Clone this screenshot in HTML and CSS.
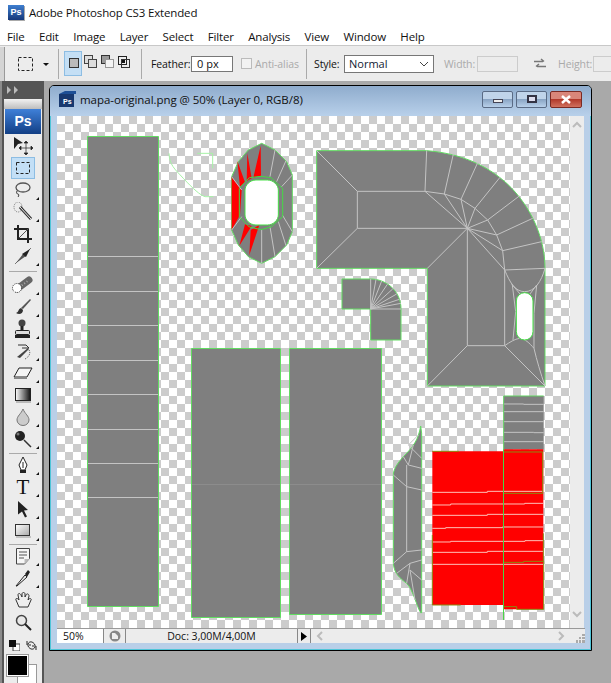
FILE: index.html
```html
<!DOCTYPE html>
<html lang="en">
<head>
<meta charset="utf-8">
<title>Adobe Photoshop CS3 Extended</title>
<link rel="stylesheet" href="styles.css">
</head>
<body>
<div class="app">
  <header class="titlebar">
    <span class="ps-badge">Ps</span>
    <span class="app-title">Adobe Photoshop CS3 Extended</span>
  </header>
  <nav class="menubar">
    <span>File</span><span>Edit</span><span>Image</span><span>Layer</span><span>Select</span><span>Filter</span><span>Analysis</span><span>View</span><span>Window</span><span>Help</span>
  </nav>
  <div class="options">
    <div class="grip"></div>
    <svg class="opt-tool" width="36" height="20" viewBox="0 0 36 20"><rect x="2.5" y="3.5" width="14" height="13" fill="none" stroke="#222" stroke-dasharray="3 2"/><path d="M27 9h6l-3 3z" fill="#111"/></svg>
    <div class="opt-sep first"></div>
    <svg class="opt-modes" width="70" height="26" viewBox="0 0 70 26">
      <rect x="0.5" y="0.5" width="17" height="24" fill="#c4dff5" stroke="#8dbde3"/>
      <rect x="5.5" y="7.5" width="9" height="9" fill="#bbb" stroke="#333"/>
      <rect x="20.5" y="4.5" width="8" height="8" fill="#ddd" stroke="#444"/><rect x="24.5" y="8.5" width="8" height="8" fill="#ddd" stroke="#444"/>
      <rect x="37.5" y="4.5" width="8" height="8" fill="#999" stroke="#333"/><rect x="41.5" y="8.5" width="8" height="8" fill="#f4f4f4" stroke="#999"/>
      <rect x="54.5" y="5.5" width="8" height="8" fill="#eee" stroke="#222"/><rect x="57" y="8" width="4" height="4" fill="#111"/><rect x="57.5" y="8.5" width="8" height="8" fill="none" stroke="#333"/>
    </svg>
    <div class="opt-sep second"></div>
    <label class="opt-label feather">Feather:</label>
    <span class="field feather-field">0 px</span>
    <span class="check"></span>
    <span class="opt-label off anti">Anti-alias</span>
    <div class="opt-sep third"></div>
    <span class="opt-label style">Style:</span>
    <span class="select">Normal<svg width="10" height="6" viewBox="0 0 10 6"><path d="M1 1l4 4 4-4" fill="none" stroke="#444"/></svg></span>
    <span class="opt-label off width-l">Width:</span>
    <span class="field off-field width-f"></span>
    <svg class="swap" width="14" height="12" viewBox="0 0 14 12"><path d="M1 3.5h9M8 1l3 2.5M13 8.5H4M6 6L3 8.500" fill="none" stroke="#777" stroke-width="1.500"/></svg>
    <span class="opt-label off height-l">Height:</span>
    <span class="field off-field height-f"></span>
  </div>

  <main class="workspace">
    <aside class="toolcol">
      <div class="tool-head"><svg width="14" height="8" viewBox="0 0 14 8"><path d="M1 0l4 4-4 4zM8 0l4 4-4 4z" fill="#bbb"/></svg></div>
      <div class="toolbox">
        <div class="tool-grip"></div>
        <div class="ps-logo">Ps</div>
        <div class="tool"><svg width="24" height="20" viewBox="0 0 24 20"><path d="M3 1l9 6-5 1-4 5z" fill="#222"/><path d="M15 7v10M10 12h10M15 5l-2 2h4zM15 19l-2-2h4zM8 12l2-2v4zM22 12l-2-2v4z" fill="#222" stroke="#222" stroke-width=".7"/></svg></div>
        <div class="tool active"><svg width="18" height="16" viewBox="0 0 18 16"><rect x="2.500" y="2.500" width="13" height="11" fill="none" stroke="#222" stroke-dasharray="3 2"/></svg></div>
        <div class="tool corner"><svg width="18" height="18" viewBox="0 0 18 18"><ellipse cx="9" cy="6.500" rx="7" ry="4.500" fill="none" stroke="#555" stroke-width="1.300"/><path d="M3 10c-1 2 0 3 1 3s1 2 0 3" fill="none" stroke="#333"/></svg></div>
        <div class="tool corner"><svg width="20" height="20" viewBox="0 0 20 20"><ellipse cx="5" cy="5" rx="4" ry="5" fill="none" stroke="#777" stroke-dasharray="1 1"/><path d="M7 5l11 12" stroke="#333" stroke-width="3"/><path d="M7 5l11 12" stroke="#eee"/></svg></div>
        <div class="tool"><svg width="20" height="20" viewBox="0 0 20 20"><path d="M5 1v14h14M1 5h14v14" fill="none" stroke="#222" stroke-width="2"/><path d="M6 14l10-10" stroke="#555"/></svg></div>
        <div class="tool corner"><svg width="18" height="18" viewBox="0 0 18 18"><path d="M1 17L17 1" stroke="#777" stroke-width="1"/><path d="M2 16l7-9 3 2z" fill="#555"/><path d="M8 7l8-5-4 8z" fill="#222"/></svg></div>
        <div class="tool-sep top"></div>
        <div class="tool corner"><svg width="22" height="18" viewBox="0 0 22 18"><path d="M5 13L17 4" stroke="#666" stroke-width="7" stroke-linecap="round"/><path d="M5 13L17 4" stroke="#aaa" stroke-width="2" stroke-dasharray="1 2"/><circle cx="5" cy="12" r="4.500" fill="#fff" stroke="#333" stroke-dasharray="1 1"/></svg></div>
        <div class="tool corner"><svg width="18" height="18" viewBox="0 0 18 18"><path d="M7 10L16 1l1 1-8 9z" fill="#555"/><path d="M7 10c-3 1-2 4-5 5 3 2 7 1 7-3z" fill="#333"/></svg></div>
        <div class="tool corner"><svg width="18" height="20" viewBox="0 0 18 20"><circle cx="8" cy="4" r="3.500" fill="#444"/><rect x="6.500" y="7" width="3" height="5" fill="#222"/><rect x="1.500" y="11.500" width="14" height="4" rx="1" fill="#ddd" stroke="#222"/><rect x="1" y="16" width="15" height="3" fill="#222"/></svg></div>
        <div class="tool corner"><svg width="18" height="18" viewBox="0 0 18 18"><path d="M4 3h8M8 6h7l-3-3" fill="none" stroke="#333"/><path d="M3 15l11-9 1 1-9 9z" fill="#444"/><path d="M15 8c2 3 0 7-4 9" fill="none" stroke="#555" stroke-dasharray="1 1"/></svg></div>
        <div class="tool corner"><svg width="20" height="14" viewBox="0 0 20 14"><path d="M6 2h13l-5 9H1z" fill="#f4f4f4" stroke="#222"/><path d="M1 11h13v2H1z" fill="#888"/></svg></div>
        <div class="tool corner"><svg width="17" height="15" viewBox="0 0 17 15"><defs><linearGradient id="gr"><stop offset="0" stop-color="#fff"/><stop offset="1" stop-color="#111"/></linearGradient></defs><rect x="0.500" y="0.500" width="15" height="12" fill="url(#gr)" stroke="#222"/><path d="M1 14h15" stroke="#888"/></svg></div>
        <div class="tool corner"><svg width="14" height="18" viewBox="0 0 14 18"><path d="M7 1C5 6 1 8 1 12a6 5.500 0 0 0 12 0C13 8 9 6 7 1z" fill="#ccc" stroke="#777"/></svg></div>
        <div class="tool corner"><svg width="18" height="18" viewBox="0 0 18 18"><circle cx="6" cy="6" r="5" fill="#222"/><circle cx="4" cy="4" r="1.500" fill="#777"/><path d="M10 10l7 7" stroke="#333" stroke-width="1.500"/></svg></div>
        <div class="tool-sep"></div>
        <div class="tool corner"><svg width="12" height="18" viewBox="0 0 12 18"><path d="M6 1l4 8-2 5H4L2 9z" fill="#fff" stroke="#222"/><path d="M6 6v6" stroke="#222"/><rect x="3" y="14" width="6" height="3" fill="#222"/></svg></div>
        <div class="tool corner type-tool">T</div>
        <div class="tool corner"><svg width="12" height="18" viewBox="0 0 12 18"><path d="M1 1l10 9-4 .500 3 6-2 1-3-6-4 3z" fill="#222"/></svg></div>
        <div class="tool corner"><svg width="16" height="14" viewBox="0 0 16 14"><defs><linearGradient id="sh" x2="1" y2="1"><stop offset="0" stop-color="#fff"/><stop offset="1" stop-color="#aaa"/></linearGradient></defs><rect x="0.500" y="0.500" width="14" height="11" fill="url(#sh)" stroke="#333"/><path d="M1 13h15" stroke="#999"/></svg></div>
        <div class="tool-sep low"></div>
        <div class="tool corner"><svg width="15" height="17" viewBox="0 0 15 17"><path d="M.5.500h13v10l-5 5.500H.5z" fill="#f6f6f6" stroke="#444"/><path d="M3 4h8M3 7h8M3 10h5" stroke="#555"/><path d="M8.500 16v-5h5z" fill="#bbb"/></svg></div>
        <div class="tool corner"><svg width="16" height="18" viewBox="0 0 16 18"><path d="M1 17l9-11 2 2-10 9z" fill="#eee" stroke="#222"/><path d="M10 5l3-4 2 2-3 5z" fill="#222"/></svg></div>
        <div class="tool"><svg width="17" height="18" viewBox="0 0 17 18"><path d="M4 16L1 9c-1-2 2-2 3 0L3 4c0-2 2-2 3 0l1 2V3c0-2 3-2 3 0v3l1-2c1-2 3-1 3 1l-1 4 1-1c1-1 3 0 2 1l-3 7z" fill="#eee" stroke="#333"/></svg></div>
        <div class="tool"><svg width="17" height="17" viewBox="0 0 17 17"><circle cx="6.500" cy="6.500" r="5" fill="#e8e8e8" stroke="#444" stroke-width="1.500"/><path d="M10 10l6 6" stroke="#222" stroke-width="2"/></svg></div>
        <div class="color-mini">
          <svg width="11" height="11" viewBox="0 0 11 11"><rect x="4" y="4" width="7" height="7" fill="#fff" stroke="#444"/><rect width="7" height="7" fill="#111"/></svg>
          <svg width="11" height="11" viewBox="0 0 11 11"><path d="M2 4c1-3 5-3 7 1M9 7c-1 3-5 3-7-1" fill="none" stroke="#222"/><path d="M1 1v4h4M10 10V6H6" fill="none" stroke="#222"/></svg>
        </div>
        <div class="swatches"><div class="bg-swatch"></div><div class="fg-swatch"></div></div>
      </div>
    </aside>

    <section class="docwin">
      <div class="doc-title">
        <svg class="doc-icon" width="17" height="16" viewBox="0 0 17 16"><path d="M0 3l6-3h11v3z" fill="#1d4f96"/><rect y="3" width="15" height="13" fill="#17386f"/><text x="4" y="13" class="doc-ps">Ps</text></svg>
        <span class="doc-name">mapa-original.png @ 50% (Layer 0, RGB/8)</span>
        <div class="win-btns">
          <span class="wbtn"><i class="g-min"></i></span>
          <span class="wbtn"><i class="g-max"></i></span>
          <span class="wbtn close"><svg width="12" height="9" viewBox="0 0 12 9"><path d="M2 1l8 7M10 1L2 8" stroke="#fff" stroke-width="2.500"/></svg></span>
        </div>
      </div>
      <div class="doc-body">
        <svg class="canvas" width="513" height="512" viewBox="57 116 513 512">
          <defs>
            <pattern id="checker" patternUnits="userSpaceOnUse" x="57" y="116" width="16" height="16">
              <rect width="16" height="16" fill="#fff"/>
              <rect x="8" width="8" height="8" fill="#ccc"/>
              <rect y="8" width="8" height="8" fill="#ccc"/>
            </pattern>
          </defs>
          <rect x="57" y="116" width="513" height="512" fill="url(#checker)"/>

          <g class="mesh">
            <rect class="uv" x="87.500" y="136.500" width="71" height="470"/>
            <path d="M88 256.500h70M88 291.500h70M88 325.500h70M88 360.500h70M88 394.500h70M88 429.500h70M88 463.500h70M88 497.500h70"/>
            <rect class="uv" x="191.500" y="348.500" width="89" height="269"/>
            <path class="faint" d="M192 484.500h88"/>
            <rect class="uv" x="289.500" y="348.500" width="92" height="266"/>
            <path class="faint" d="M290 484.500h91"/>
          </g>

          <g class="mesh z3" transform="translate(150 125) scale(.33333)">
            <path class="ghost" d="M57 85c2 35 15 45 43 75 30 32 50 50 65 55h25M142 85h46v45"/>
            <path class="uv" d="M335 55l40 20 35 35 17 40v170l-17 40-35 35-40 20-40-20-30-35-20-45V155l20-45 30-35z"/>
            <path class="red" d="M245 155l30 40-5 75-25 45zM262 108l23 64-15 13zM292 85l13 75-15 8zM332 62l1 90-23 6zM285 298l20 5-37 59zM302 315l26-15-30 90z"/>
            <path d="M375 75l-15 80M408 107l-28 63M427 150l-32 35M427 320l-30-50M408 362l-23-72M375 395l-15-90M335 415v-100M245 315l30-40M245 155l30 40"/>
            <path class="hole" d="M318 165h34c18 0 33 15 33 30v75c0 15-15 30-33 30h-34c-18 0-33-15-33-30v-75c0-15 15-30 33-30z"/>
            <path class="green" d="M333 154l30 4 35 32v85l-35 31-30 8-35-8-30-31v-85l30-32z"/>
          </g>

          <g class="mesh z3" transform="translate(310 140) scale(.33333)">
            <path class="uv" d="M20 32H350C450 40 530 75 590 130C660 195 705 290 705 385V738H352V385H20z"/>
            <path d="M20 32L142 154H345M142 154V265H472M142 265L20 385M350 32l-5 122M472 265L352 385M472 265V617M472 617H584M472 617L352 738M584 617l121 121M584 390V617"/>
            <path d="M345 154l58 8 50 16 42 27 38 35 27 45 18 47 6 58M472 265L345 154M472 265L403 162M472 265L453 178M472 265L495 205M472 265L533 240M472 265L560 285M472 265L578 332M472 265L584 390"/>
            <path d="M403 162l27-120M453 178l50-110M495 205l75-93M533 240l95-72M560 285l108-50M578 332l117-27M584 390l121-5"/>
            <path d="M584 390c15 35 30 65 60 65s50-30 61-70M605 432l25 30M680 435l-20 27M607 435l10 80-8 85M680 435l-8 85v105M584 617c15-10 30-20 45-22 15 0 30 15 43 30 8 35 20 75 33 113"/>
            <rect class="hole" x="619" y="458" width="50" height="142" rx="25"/>
          </g>

          <g class="mesh z3" transform="translate(330 270) scale(.33333)">
            <path class="uv" d="M36 27h86C165 27 213 60 213 117v93h-91v-93h-86z"/>
            <path d="M122 117V27M122 117L138 28M122 117L155 33M122 117L172 43M122 117L188 57M122 117L200 72M122 117L208 88M122 117L213 100M122 117h91"/>
          </g>

          <g class="mesh z3" transform="translate(380 390) scale(.33333)">
            <path class="uv" d="M122 108C115 150 100 170 70 200C50 222 40 240 40 255V520C42 550 60 565 80 580C100 600 110 650 122 668H125V130z"/>
            <path d="M40 255l40 35 45 10M70 200l15 25 40 10M100 165l-15 60M115 135l-30 30 40 40M80 225v260M40 520l40-35 45-5M50 550l40-30 35-10M80 580l10-60M105 630l-15-90 35 30"/>
            <rect class="gray-strip" x="371" y="18" width="120" height="160"/>
            <path d="M371 42h60v1h60M371 65h120M371 95h120M371 127h90v1h30M371 155h120"/>
            <path class="red-fill" d="M157 184H370V178H490V658H371V645H157z"/>
            <path class="pink" d="M157 307H322v-3H490M157 345h55v-3h222v-2h56M157 376H322v-3H490M157 415h40v-2H367v-2H490M157 456h55v-2H435v-2H490M157 487H322v-3H490M157 523H490"/>
            <path class="olive" d="M157 184h80M157 435V645h85M371 186h117v124H371M371 517h60v-3h60v144H410v-8h-40M490 430v85"/>
            <path class="green" d="M370.500 178V690"/>
            <path class="green-thin" d="M371 18H491M371 18V178"/>
          </g>
        </svg>
        <div class="vscroll">
          <svg width="10" height="7" viewBox="0 0 10 7"><path d="M1 6l4-4 4 4" fill="none" stroke="#bbb" stroke-width="2"/></svg>
          <svg width="10" height="7" viewBox="0 0 10 7"><path d="M1 1l4 4 4-4" fill="none" stroke="#bbb" stroke-width="2"/></svg>
        </div>
      </div>
      <div class="statusbar">
        <span class="zoomval">50%</span>
        <span class="st-icon"><svg width="12" height="12" viewBox="0 0 12 12"><circle cx="6" cy="6" r="5.500" fill="#888"/><path d="M3 3h3l3 3v3H3z" fill="#eee"/></svg></span>
        <span class="docsize">Doc: 3,00M/4,00M</span>
        <span class="st-arrow"><svg width="6" height="9" viewBox="0 0 6 9"><path d="M0 0l6 4.500L0 9z" fill="#000"/></svg></span>
        <span class="hscroll">
          <svg width="7" height="10" viewBox="0 0 7 10"><path d="M6 1L2 5l4 4" fill="none" stroke="#bbb" stroke-width="2"/></svg>
          <svg width="7" height="10" viewBox="0 0 7 10"><path d="M1 1l4 4-4 4" fill="none" stroke="#bbb" stroke-width="2"/></svg>
        </span>
        <span class="resize"><svg width="9" height="9" viewBox="0 0 9 9"><path d="M6 0h3v2H6zM3 3h2v2H3zM6 3h3v2H6zM0 6h2v3H0zM3 6h2v3H3zM6 6h3v3H6z" fill="#aaa"/></svg></span>
      </div>
    </section>
  </main>
</div>
</body>
</html>
```
FILE: styles.css
```css
* { box-sizing: border-box; }
html, body { margin: 0; padding: 0; }
body { width: 611px; height: 683px; overflow: hidden; background: #a9a9a9; font-family: "Open Sans", "Noto Sans", sans-serif; color: #111; }
.app { width: 611px; height: 683px; display: flex; flex-direction: column; overflow: hidden; }

.titlebar { height: 26px; background: #fff; display: flex; align-items: center; padding: 0 0 2px 8px; gap: 5px; }
.ps-badge { width: 16px; height: 15px; background: linear-gradient(#3f7fd0, #15387a); color: #fff; font: bold 9px/15px "Liberation Sans", sans-serif; text-align: center; box-shadow: 1px 1px 0 #aaa; }
.app-title { font-size: 11.500px; letter-spacing: -.16px; }

.menubar { height: 19px; background: #fff; display: flex; padding-left: 7px; gap: 14.400px; font-size: 11.500px; line-height: 21px; letter-spacing: -.16px; }

.options { height: 36px; flex: none; background: #ececec; border-top: 1px solid #c8c8c8; position: relative; display: flex; align-items: center; font-size: 11px; }
.grip { width: 5px; height: 34px; background: #d4d4d4; border-right: 1px solid #999; margin-right: 11px; flex: none; }
.opt-tool { flex: none; margin-right: 6px; }
.opt-sep { width: 1px; height: 30px; background: #aaa; flex: none; }
.opt-sep.second { margin: 0 9px 0 7px; height: 30px; }
.opt-modes { flex: none; margin-left: 5px; }
.opt-label { flex: none; font-size: 10.500px; letter-spacing: -.1px; }
.off { color: #aaa; }
.feather { width: 40px; }
.field { display: block; flex: none; height: 16px; background: #fff; border: 1px solid #777; font-size: 11px; line-height: 14px; padding-left: 5px; }
.feather-field { width: 42px; }
.check { width: 11px; height: 11px; border: 1px solid #bbb; background: #f2f2f2; margin: 0 3px 0 8px; flex: none; }
.anti { width: 51px; }
.third { margin-right: 7px; }
.style { width: 30px; }
.select { width: 90px; height: 18px; background: #fff; border: 1px solid #777; flex: none; display: flex; justify-content: space-between; align-items: center; padding: 0 4px; font-size: 11px; color: #123; }
.width-l { margin-left: 10px; width: 33px; }
.off-field { background: #ececec; border-color: #ccc; }
.width-f { width: 41px; }
.swap { margin: 0 11px 0 15px; flex: none; }
.height-l { width: 35px; margin-left: 0; }
.height-f { width: 40px; }

.workspace { flex: 1; display: flex; min-height: 0; align-items: flex-start; background: #a9a9a9; }

.toolcol { width: 44px; height: 602px; flex: none; background: #555; border-left: 2px solid #8c8c8c; padding: 0 2px; }
.tool-head { height: 18px; padding: 5px 0 0 2px; display: flex; }
.toolbox { width: 38px; background: #ececec; display: flex; flex-direction: column; align-items: center; height: 584px; }
.tool-grip { width: 100%; height: 10px; background: linear-gradient(#f2f2f2, #bdbdbd); flex: none; }
.ps-logo { width: 36px; height: 25px; flex: none; background: linear-gradient(#3f80d8, #123f85); color: #fff; font: bold 14px/24px "Liberation Sans", sans-serif; text-align: center; margin-bottom: 1px; }
.tool { width: 24px; height: 22px; flex: none; display: flex; align-items: center; justify-content: center; position: relative; }
.tool.active { background: #c3dff6; border: 1px solid #8dbde3; }
.tool.corner::after { content: ""; position: absolute; right: -4px; bottom: 1px; border-style: solid; border-width: 0 0 3px 3px; border-color: transparent transparent #111 transparent; }
.tool-sep { width: 28px; height: 1px; background: #aaa; margin: 3px 0 0; flex: none; }
.tool-sep.top { margin: 4px 0 2px; }
.tool-sep.low { margin: 2px 0 0; }
.type-tool { font: 21px/22px "Liberation Serif", serif; color: #111; }
.color-mini { width: 28px; display: flex; justify-content: space-between; margin-top: 7px; flex: none; }
.swatches { position: relative; width: 32px; height: 28px; margin-top: 4px; flex: none; }
.fg-swatch { position: absolute; left: 0; top: 0; width: 21px; height: 21px; background: #000; border: 1px solid #fff; outline: 1px solid #999; }
.bg-swatch { position: absolute; left: 10px; top: 9px; width: 20px; height: 20px; background: #fff; border: 1px solid #999; }

.docwin { width: 543px; height: 566px; margin: 4px 0 0 5px; flex: none; display: flex; flex-direction: column; background: #b9cfe8; border: 1px solid #000; border-radius: 5px 5px 0 0; box-shadow: inset 0 0 0 1px #4fc5d8; padding: 0 6px 6px 7px; }
.doc-title { height: 30px; flex: none; margin: 0 -6px 0 -7px; padding: 0 9px 4px 9px; background: linear-gradient(#8faccd, #b8d0ea); border-radius: 4px 4px 0 0; display: flex; align-items: center; }
.doc-icon { flex: none; }
.doc-ps { font: bold 7px "Liberation Sans", sans-serif; fill: #fff; }
.doc-name { font-size: 11.500px; margin-left: 4px; flex: 1; letter-spacing: -.05px; }
.win-btns { display: flex; gap: 3px; }
.wbtn { width: 31px; height: 17px; border: 1px solid #5a6b85; border-radius: 2px; background: linear-gradient(#c0d4ea 0 50%, #8aa5c4 50%, #b8d0ea); display: flex; align-items: center; justify-content: center; }
.wbtn.close { background: linear-gradient(#d9867a 0 50%, #b23a2c 50%, #d0705e); border-color: #7a2a24; width: 32px; }
.g-min { width: 10px; height: 4px; background: #eee; border: 1px solid #445; display: block; margin-top: 3px; }
.g-max { width: 10px; height: 8px; border: 2px solid #334; background: #dde; display: block; }

.doc-body { display: flex; height: 512px; flex: none; }
.canvas { display: block; flex: none; }
.vscroll { width: 14px; background: #ececec; flex: none; display: flex; flex-direction: column; justify-content: space-between; align-items: center; padding: 5px 0 10px; }

.mesh rect, .mesh path { vector-effect: non-scaling-stroke; }
.mesh { fill: none; stroke: #c4c4c4; stroke-width: 1; }
.mesh .uv { fill: #7f7f7f; stroke: #62dc62; }
.mesh .faint { stroke: #8c8c8c; }
.mesh .ghost { stroke: #a6f2a6; }
.mesh .red { fill: #ff0000; stroke: none; }
.mesh .hole { fill: #fff; stroke: #45e045; }
.mesh .green { stroke: #45d845; }
.mesh .green-thin { stroke: #63d463; }
.mesh .gray-strip { fill: #7f7f7f; stroke: none; }
.mesh .red-fill { fill: #ff0000; stroke: none; }
.mesh .pink { stroke: #ffc0b8; }
.mesh .olive { stroke: #8a8a10; }

.statusbar { height: 15px; flex: none; display: flex; background: #ececec; font-size: 10.500px; line-height: 15px; border-top: 1px solid #999; }
.zoomval { width: 47px; background: #fff; padding-left: 6px; border-right: 1px solid #888; flex: none; }
.st-icon { width: 22px; flex: none; border-right: 1px solid #888; display: flex; align-items: center; justify-content: center; }
.docsize { width: 171px; flex: none; text-align: center; }
.st-arrow { width: 14px; flex: none; border-left: 1px solid #888; border-right: 1px solid #888; display: flex; align-items: center; justify-content: center; }
.hscroll { flex: 1; display: flex; justify-content: space-between; align-items: center; padding: 0 6px 0 5px; }
.resize { width: 14px; flex: none; display: flex; align-items: flex-end; justify-content: flex-end; }
```
